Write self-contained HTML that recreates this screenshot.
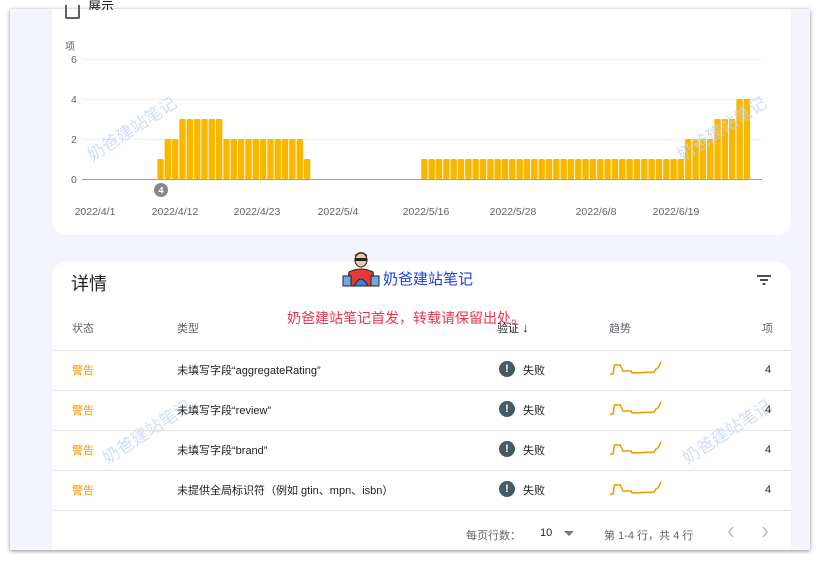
<!DOCTYPE html>
<html><head><meta charset="utf-8">
<style>
*{margin:0;padding:0;box-sizing:border-box}
body{width:821px;height:562px;background:#fff;position:relative;overflow:hidden;font-family:"Liberation Sans","Noto Sans CJK SC",sans-serif;color:#202124}
#frame{position:absolute;left:10px;top:9px;width:800px;height:541px;background:#f3f4fc;box-shadow:0 1px 4px rgba(0,0,0,.45);overflow:hidden}
.card{position:absolute;background:#fff;border-radius:14px}
.abs{position:absolute;white-space:nowrap}
.hd{font-size:11px;color:#5f6368}
.row{position:absolute;left:42px;width:739px;height:1px;background:#e3e3e3}
.cell{position:absolute;font-size:11px;color:#202124;white-space:nowrap}
.warn{color:#f29900}
.ic{position:absolute;width:16px;height:16px;border-radius:50%;background:#455a64;color:#fff;font-size:11px;font-weight:bold;text-align:center;line-height:16px}
.wm{position:absolute;color:#c3d2f7;font-size:17px;transform:rotate(-33deg);white-space:nowrap;opacity:.75}
</style></head><body>
<div id="frame">
  <div class="card" style="left:42px;top:-20px;width:739px;height:246px"></div>
  <div class="card" style="left:42px;top:253px;width:739px;height:300px"></div>
</div>
<div class="abs" style="left:65px;top:5px;width:15px;height:14px;border:2px solid #5f6368;border-top:none;border-radius:0 0 2px 2px"></div>
<div class="abs" style="left:88px;top:0px;font-size:13px;line-height:14px;color:#202124;height:10px;overflow:hidden">展示</div>
<div class="abs" style="left:65px;top:38px;font-size:10px;color:#5f6368">项</div>
<svg class="abs" style="left:0;top:0" width="821" height="240">
  <g stroke="#eeeeee" stroke-width="1">
    <line x1="82" y1="59.5" x2="762" y2="59.5"/><line x1="82" y1="99.5" x2="762" y2="99.5"/><line x1="82" y1="139.5" x2="762" y2="139.5"/>
  </g>
  <g font-size="10.5" fill="#5f6368" font-family="Liberation Sans">
    <text x="71" y="63">6</text><text x="71" y="103">4</text><text x="71" y="143">2</text><text x="71" y="183">0</text>
  </g>
  <g id="bars" fill="#f9b800"></g>
  <line x1="82" y1="179.5" x2="762" y2="179.5" stroke="#9e9e9e" stroke-width="1"/>
  <circle cx="161" cy="190" r="7" fill="#888"/>
  <text x="161" y="193.5" font-size="9" fill="#fff" text-anchor="middle" font-weight="bold" font-family="Liberation Sans">4</text>
  <g font-size="10.5" fill="#5f6368" font-family="Liberation Sans" text-anchor="middle">
    <text x="95" y="215">2022/4/1</text><text x="175" y="215">2022/4/12</text><text x="257" y="215">2022/4/23</text>
    <text x="338" y="215">2022/5/4</text><text x="426" y="215">2022/5/16</text><text x="513" y="215">2022/5/28</text>
    <text x="596" y="215">2022/6/8</text><text x="676" y="215">2022/6/19</text>
  </g>
</svg>
<script>
var v={0:1,1:2,2:2,20:1};for(var i=3;i<=8;i++)v[i]=3;for(i=9;i<=19;i++)v[i]=2;for(i=36;i<=71;i++)v[i]=1;for(i=72;i<=75;i++)v[i]=2;for(i=76;i<=78;i++)v[i]=3;v[79]=4;v[80]=4;
var g=document.getElementById('bars'),s='';for(var k in v){var x=157.3+7.33*k,h=v[k]*20;s+='<rect x="'+x.toFixed(1)+'" y="'+(179-h)+'" width="6.4" height="'+h+'" rx="1"/>';}g.innerHTML=s;
</script>
<div class="wm" style="left:80px;top:115px">奶爸建站笔记</div>
<div class="wm" style="left:670px;top:115px">奶爸建站笔记</div>
<div class="wm" style="left:95px;top:418px">奶爸建站笔记</div>
<div class="wm" style="left:675px;top:418px">奶爸建站笔记</div>
<div class="abs" style="left:71px;top:270px;font-size:18px;color:#202124">详情</div>
<svg class="abs" style="left:756px;top:274px" width="16" height="12"><g stroke="#202124" stroke-width="1.6"><line x1="1" y1="2" x2="15" y2="2"/><line x1="4" y1="6" x2="12" y2="6"/><line x1="6.5" y1="10" x2="9.5" y2="10"/></g></svg>
<svg class="abs" style="left:341px;top:250px" width="40" height="38">
  <ellipse cx="20" cy="10" rx="6" ry="7" fill="#f4c9a0" stroke="#222"/>
  <path d="M14 7 Q20 0 26 7 L26 5 Q20 -1 14 5Z" fill="#333"/>
  <rect x="14" y="8" width="12" height="3" fill="#222"/>
  <path d="M6 36 L8 22 Q20 16 32 22 L34 36Z" fill="#e53935" stroke="#222"/>
  <path d="M13 36 Q20 22 27 36Z" fill="#3f7fd8" stroke="#222"/>
  <rect x="2" y="26" width="8" height="10" fill="#6ea8e6" stroke="#222"/><rect x="30" y="26" width="8" height="10" fill="#6ea8e6" stroke="#222"/>
</svg>
<div class="abs" style="left:383px;top:268px;font-size:15px;color:#1a3fe0">奶爸建站笔记</div>
<div class="abs" style="left:287px;top:308px;font-size:14px;color:#f0334d">奶爸建站笔记首发，转载请保留出处。</div>
<div class="abs hd" style="left:72px;top:320px">状态</div>
<div class="abs hd" style="left:177px;top:320px">类型</div>
<div class="abs hd" style="left:497px;top:320px;color:#202124">验证 <span style="font-size:13px">↓</span></div>
<div class="abs hd" style="left:609px;top:320px">趋势</div>
<div class="abs hd" style="left:762px;top:320px">项</div>
<div class="row" style="top:350px;left:52px"></div>
<div class="row" style="top:390px;left:52px"></div>
<div class="row" style="top:430px;left:52px"></div>
<div class="row" style="top:470px;left:52px"></div>
<div class="row" style="top:510px;left:52px"></div>

<div class="cell warn" style="left:72px;top:362px">警告</div>
<div class="cell" style="left:177px;top:362px">未填写字段“aggregateRating”</div>
<div class="cell warn" style="left:72px;top:402px">警告</div>
<div class="cell" style="left:177px;top:402px">未填写字段“review”</div>
<div class="cell warn" style="left:72px;top:442px">警告</div>
<div class="cell" style="left:177px;top:442px">未填写字段“brand”</div>
<div class="cell warn" style="left:72px;top:482px">警告</div>
<div class="cell" style="left:177px;top:482px">未提供全局标识符（例如 gtin、mpn、isbn）</div>

<div class="ic" style="left:499px;top:361px">!</div><div class="cell" style="left:523px;top:362px">失败</div>
<div class="ic" style="left:499px;top:401px">!</div><div class="cell" style="left:523px;top:402px">失败</div>
<div class="ic" style="left:499px;top:441px">!</div><div class="cell" style="left:523px;top:442px">失败</div>
<div class="ic" style="left:499px;top:481px">!</div><div class="cell" style="left:523px;top:482px">失败</div>

<svg class="abs" style="left:0;top:0" width="821" height="562">
  <defs><polyline id="sp" points="610,374 613,374 614.5,365 620,365 623,371 631,371 632,373 654,372 656,369 658,368 661,362" fill="none" stroke="#f29900" stroke-width="1.5"/></defs>
  <use href="#sp"/><use href="#sp" y="40"/><use href="#sp" y="80"/><use href="#sp" y="120"/>
</svg>
<div class="cell" style="left:765px;top:364px">4</div>
<div class="cell" style="left:765px;top:404px">4</div>
<div class="cell" style="left:765px;top:444px">4</div>
<div class="cell" style="left:765px;top:484px">4</div>

<div class="abs" style="left:466px;top:527px;font-size:11px;color:#5f6368">每页行数：</div>
<div class="abs" style="left:540px;top:527px;font-size:11px;color:#202124">10</div>
<div class="abs" style="left:564px;top:531px;width:0;height:0;border-left:5px solid transparent;border-right:5px solid transparent;border-top:5px solid #777"></div>
<div class="abs" style="left:604px;top:527px;font-size:11px;color:#5f6368">第 1-4 行，共 4 行</div>
<svg class="abs" style="left:724px;top:525px" width="50" height="14"><g fill="none" stroke="#b0b0b0" stroke-width="1.4"><polyline points="9,2 5,7 9,12"/><polyline points="39,2 43,7 39,12"/></g></svg>
</body></html>
